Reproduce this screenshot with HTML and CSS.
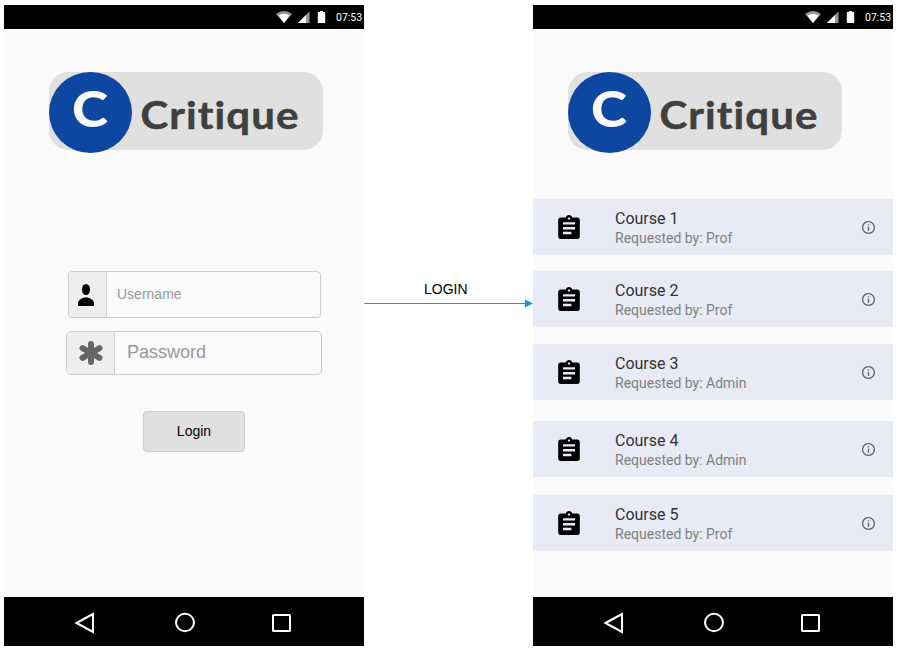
FILE: index.html
```html
<!DOCTYPE html>
<html lang="en">
<head>
<meta charset="utf-8">
<title>Critique</title>
<link rel="stylesheet" href="styles.css">
</head>
<body>
<svg class="defs" width="0" height="0" aria-hidden="true">
  <symbol id="status" viewBox="0 0 50 12">
    <path d="M0 3Q8-3 16 3L8 12Z" fill="#999"/><path d="M2.500 4.600Q8 .8 13.500 4.600L8 12Z" fill="#fff"/>
    <path d="M33.500 .5V12H22Z" fill="#999"/><path d="M30 4V12H22Z" fill="#fff"/>
    <path d="M44 0h3v1h1.500q.7 0 .7.700v9.600q0 .7-.7.700h-6q-.7 0-.7-.7V1.700q0-.7.700-.7H44Z" fill="#fff"/>
  </symbol>
  <symbol id="nav" viewBox="0 0 360 49">
    <g fill="none" stroke="#fff" stroke-width="2"><path d="M72.500 26 89 17V35Z"/><ellipse cx="181" cy="25.500" rx="9" ry="8.700"/><rect x="269" y="18" width="17" height="16" rx=".5"/></g>
  </symbol>
  <symbol id="task" viewBox="3 1 18 20">
    <path d="M19 3h-4.180C14.400 1.840 13.300 1 12 1s-2.400.840-2.820 2H5c-1.100 0-2 .9-2 2v14c0 1.100.9 2 2 2h14c1.100 0 2-.9 2-2V5c0-1.100-.9-2-2-2zm-7 0c.55 0 1 .45 1 1s-.45 1-1 1-1-.45-1-1 .45-1 1-1zm2 14H7v-2h7v2zm3-4H7v-2h10v2zm0-4H7V7h10v2z"/>
  </symbol>
  <symbol id="info" viewBox="2 2 20 20">
    <path fill="#5f6066" d="M11 17h2v-6h-2v6zm1-15C6.480 2 2 6.480 2 12s4.480 10 10 10 10-4.480 10-10S17.520 2 12 2zm0 18c-4.410 0-8-3.590-8-8s3.590-8 8-8 8 3.590 8 8-3.590 8-8 8zM11 9h2V7h-2v2z"/>
  </symbol>
</svg>
<main class="flow">
  <section class="phone">
    <header class="status"><svg width="50" height="12"><use href="#status"/></svg><span>07:53</span></header>
    <div class="screen login">
      <svg class="logo" width="274" height="81">
        <rect width="274" height="78" rx="19.500" fill="#e0e0e0"/>
        <ellipse cx="41.500" cy="40.500" rx="41.500" ry="40.500" fill="#0d47a1"/>
        <text class="initial" x="23" y="54.500" textLength="36" lengthAdjust="spacingAndGlyphs">C</text>
        <text class="wordmark" x="91.500" y="57" textLength="159" lengthAdjust="spacingAndGlyphs">Critique</text>
      </svg>
      <div class="field username">
        <span class="addon"><svg width="16" height="22"><ellipse cx="8" cy="5.500" rx="4" ry="5.500"/><path d="M0 22V19C0 16 4 13.500 8 13.500S16 16 16 19V22Z"/></svg></span>
        <span class="hint">Username</span>
      </div>
      <div class="field password">
        <span class="addon"><svg width="24" height="24"><path d="M12 3V21M3.500 7.200 20.500 16.800M3.500 16.800 20.500 7.200" stroke="#666" stroke-width="6" stroke-linecap="round"/></svg></span>
        <span class="hint">Password</span>
      </div>
      <div class="button">Login</div>
    </div>
    <footer class="nav"><svg width="360" height="49"><use href="#nav"/></svg></footer>
  </section>
  <div class="link">
    <span>LOGIN</span>
    <svg width="169" height="9"><path d="M.5 4.500H162" stroke="#009fe3"/><path d="M161 .5 169 4.500 161 8.500Z" fill="#009fe3"/></svg>
  </div>
  <section class="phone">
    <header class="status"><svg width="50" height="12"><use href="#status"/></svg><span>07:53</span></header>
    <div class="screen courses">
      <svg class="logo" width="274" height="81">
        <rect width="274" height="78" rx="19.500" fill="#e0e0e0"/>
        <ellipse cx="41.500" cy="40.500" rx="41.500" ry="40.500" fill="#0d47a1"/>
        <text class="initial" x="23" y="54.500" textLength="36" lengthAdjust="spacingAndGlyphs">C</text>
        <text class="wordmark" x="91.500" y="57" textLength="159" lengthAdjust="spacingAndGlyphs">Critique</text>
      </svg>
      <div class="course"><svg width="22" height="24"><use href="#task"/></svg><div class="text"><b>Course 1</b><span>Requested by: Prof</span></div><svg width="13" height="13"><use href="#info"/></svg></div>
      <div class="course"><svg width="22" height="24"><use href="#task"/></svg><div class="text"><b>Course 2</b><span>Requested by: Prof</span></div><svg width="13" height="13"><use href="#info"/></svg></div>
      <div class="course third"><svg width="22" height="24"><use href="#task"/></svg><div class="text"><b>Course 3</b><span>Requested by: Admin</span></div><svg width="13" height="13"><use href="#info"/></svg></div>
      <div class="course fourth"><svg width="22" height="24"><use href="#task"/></svg><div class="text"><b>Course 4</b><span>Requested by: Admin</span></div><svg width="13" height="13"><use href="#info"/></svg></div>
      <div class="course fifth"><svg width="22" height="24"><use href="#task"/></svg><div class="text"><b>Course 5</b><span>Requested by: Prof</span></div><svg width="13" height="13"><use href="#info"/></svg></div>
    </div>
    <footer class="nav"><svg width="360" height="49"><use href="#nav"/></svg></footer>
  </section>
</main>
</body>
</html>
```
FILE: styles.css
```css
* { box-sizing: border-box; }
body { margin: 0; background: #fff; font-family: "Liberation Sans", sans-serif; }
svg { display: block; flex: none; }
.defs { position: absolute; }
.flow { display: flex; padding: 5px 0 0 4px; }
.phone { width: 360px; height: 641px; display: flex; flex-direction: column; background: #fafafa; }
.status { height: 24px; background: #000; color: #fff; display: flex; align-items: center; padding-left: 272px; gap: 10px; font: 10.500px/24px Roboto, sans-serif; }
.status span { white-space: nowrap; padding-top: 1px; }
.screen { flex: 1; }
.nav { height: 49px; background: #000; }
.logo { overflow: visible; }
.initial, .wordmark { font-family: Lato, sans-serif; font-weight: 900; font-variant-ligatures: none; }
.initial { font-size: 50px; fill: #fafafa; }
.wordmark { font-size: 38px; font-weight: 700; letter-spacing: 1px; fill: #404040; stroke: #404040; stroke-width: .5px; }
.login { padding-top: 43px; }
.login .logo { margin-left: 45px; }
.field { display: flex; border: 1px solid #ccc; border-radius: 4px; overflow: hidden; color: #999; }
.addon { background: #eee; border-right: 1px solid #ccc; display: flex; align-items: center; }
.username { width: 253px; height: 47px; margin: 118px 0 0 64px; font-size: 14px; line-height: 44px; }
.username .addon { width: 38px; padding-left: 9px; }
.username .hint { padding-left: 10px; }
.password { width: 256px; height: 44px; margin: 13px 0 0 62px; font-size: 18px; line-height: 40px; border-radius: 5px; }
.password .addon { width: 48px; padding-left: 12px; }
.password .hint { padding-left: 12px; }
.button { width: 102px; height: 41px; margin: 36px 0 0 139px; border: 1px solid #ccc; border-radius: 4px; background: #e0e0e0; font-size: 14px; line-height: 39px; text-align: center; }
.link { width: 169px; padding-top: 276px; font-size: 14px; line-height: 16px; }
.link span { display: block; padding-left: 60px; }
.link svg { margin-top: 2px; }
.courses { padding-top: 43px; }
.courses .logo { margin: 0 0 46px 35px; }
.course { height: 56px; margin-bottom: 16px; padding: 0 18px 0 25px; display: flex; align-items: center; background: #e8eaf6; font-family: Roboto, sans-serif; }
.third { margin-top: 17px; }
.fourth { margin-top: 21px; }
.fifth { margin-top: 18px; }
.course:has(+ .third), .third, .fourth, .fifth { margin-bottom: 0; }
.text { flex: 1; margin-left: 35px; padding-top: 3px; }
.text b { display: block; font-size: 16px; line-height: 20px; font-weight: 400; color: #333; }
.text span { display: block; font-size: 14px; line-height: 19px; color: #808080; }
```
